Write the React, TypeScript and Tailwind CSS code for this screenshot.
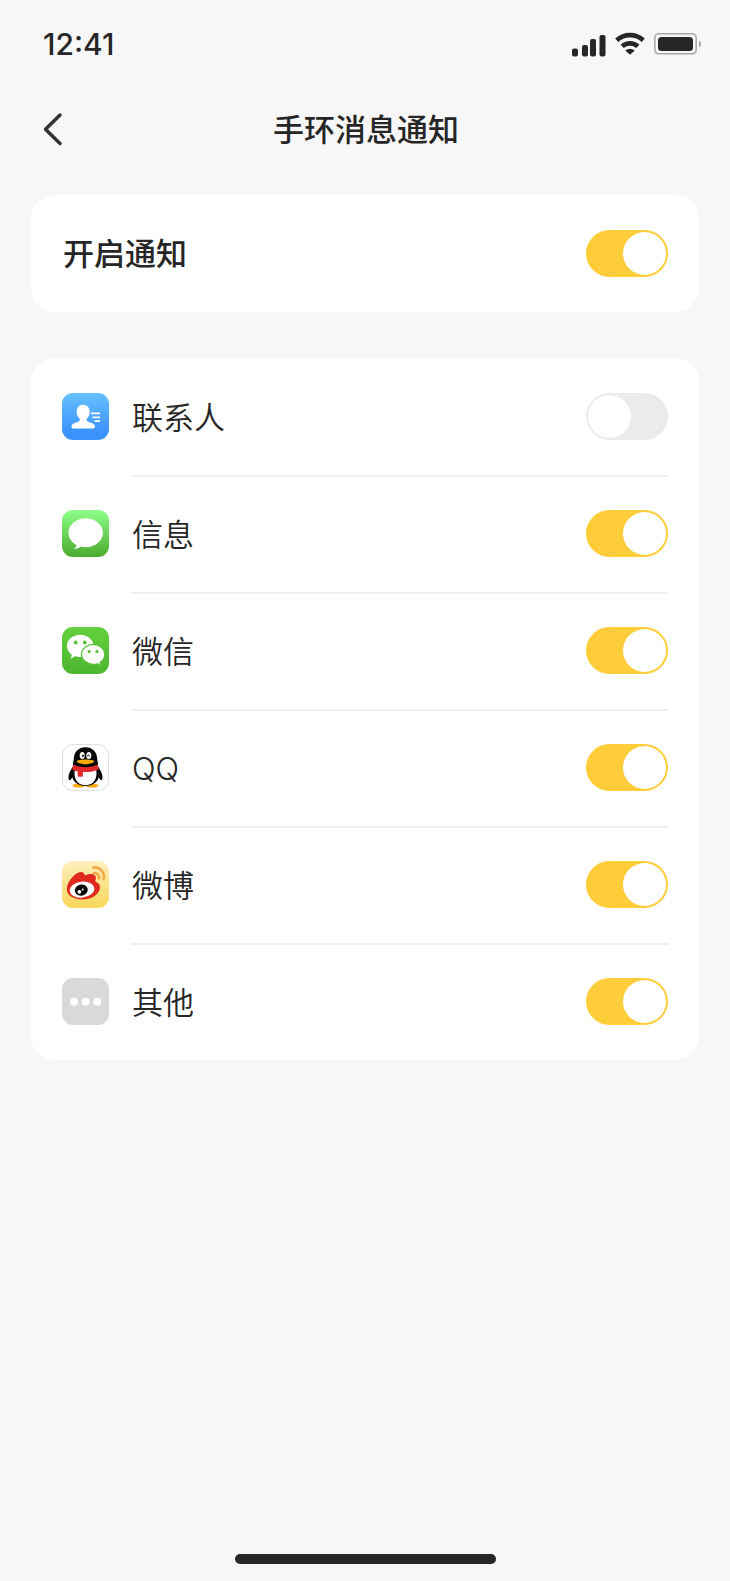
import { useState } from 'react';
import type { ReactNode } from 'react';

interface AppItem {
    id: string;
    name: string;
    icon: ReactNode;
    enabled: boolean;
}

const ICON_CLASS = 'block w-[47px] h-[47px] shrink-0';

function ContactsIcon() {
    return (
        <svg viewBox="0 0 47 47" className={ICON_CLASS} aria-hidden="true">
            <defs>
                <linearGradient id="contactsBg" x1="0" y1="0" x2="0" y2="1">
                    <stop offset="0" stopColor="#66c0ff" />
                    <stop offset="0.85" stopColor="#3a93ff" />
                    <stop offset="1" stopColor="#3a93ff" />
                </linearGradient>
            </defs>
            <rect width="47" height="47" rx="11" fill="url(#contactsBg)" />
            <path
                d="M21 11.800c-3.800 0-6.400 2.900-6.400 6.900 0 3 1.300 5.500 3.100 6.900.3 2.200-.5 3-2.300 3.600l-2.800.9c-2 .7-3.100 2-3.100 3.600 0 1.200.6 1.800 1.800 1.800h19.800c1.200 0 1.800-.6 1.800-1.800 0-1.600-1.100-2.900-3.100-3.600l-2.800-.9c-1.800-.6-2.600-1.400-2.300-3.600 1.800-1.400 3.100-3.900 3.100-6.900 0-4-2.800-6.900-6.800-6.900z"
                fill="#fff"
            />
            <path d="M29 20.300h9M30.500 24.300H38M32.500 28.200H38" stroke="#fff" strokeWidth="1.800" fill="none" />
        </svg>
    );
}

function MessagesIcon() {
    return (
        <svg viewBox="0 0 47 47" className={ICON_CLASS} aria-hidden="true">
            <defs>
                <linearGradient id="messagesBg" x1="0" y1="0" x2="0" y2="1">
                    <stop offset="0" stopColor="#8dff88" />
                    <stop offset="1" stopColor="#4bab2d" />
                </linearGradient>
            </defs>
            <rect width="47" height="47" rx="11" fill="url(#messagesBg)" />
            <path
                d="M23.700 8.200c-9.500 0-17.200 6.500-17.200 14.500 0 5.200 3.200 9.700 8 12.300-.3 1.500-1 2.700-2.200 3.900 2.500.1 4.700-.9 6.500-2.300 1.600.4 3.200.6 4.900.6 9.500 0 17.200-6.500 17.200-14.500S33.200 8.200 23.700 8.200z"
                fill="#fff"
            />
        </svg>
    );
}

function WechatIcon() {
    return (
        <svg viewBox="0 0 47 47" className={ICON_CLASS} aria-hidden="true">
            <defs>
                <linearGradient id="wechatBg" x1="0" y1="0" x2="0" y2="1">
                    <stop offset="0" stopColor="#62d13d" />
                    <stop offset="1" stopColor="#4eb52f" />
                </linearGradient>
            </defs>
            <rect width="47" height="47" rx="11" fill="url(#wechatBg)" />
            <path
                d="M18.200 7.800C10.800 7.800 4.900 12.800 4.900 19c0 3.500 1.900 6.600 5 8.700l-1.200 4 4.600-2.500c1.600.5 3.200.8 4.900.8 7.400 0 13.300-5 13.300-11.100S25.600 7.800 18.200 7.800z"
                fill="#fff"
            />
            <path
                d="M31.300 17.300c-6.300 0-11.800 4.400-11.800 9.900S25 37.300 31.300 37.300c1.400 0 2.800-.2 4-.6l3.600 2-.9-3.300c2.800-1.800 4.700-4.700 4.700-8 0-5.500-5.100-10.100-11.400-10.100z"
                fill="#fff"
                stroke="#58c237"
                strokeWidth="1.200"
            />
            <g fill="#55bf35">
                <circle cx="13.700" cy="15.500" r="1.900" />
                <circle cx="22.800" cy="15.500" r="1.900" />
                <circle cx="27.200" cy="24.500" r="1.600" />
                <circle cx="35" cy="24.500" r="1.600" />
            </g>
        </svg>
    );
}

function QQIcon() {
    return (
        <svg viewBox="0 0 47 47" className={ICON_CLASS} aria-hidden="true">
            <rect x="0.500" y="0.500" width="46" height="46" rx="10.500" fill="#fff" stroke="#dedede" />
            <ellipse cx="17" cy="41.600" rx="6.500" ry="1.900" fill="#faab07" />
            <ellipse cx="30" cy="41.600" rx="6.500" ry="1.900" fill="#faab07" />
            <path
                d="M23.500 3.300c-7 0-11.700 4.800-11.700 11.700 0 1.700-.5 2.400-.7 4.200-.2 1.200.2 2.400-.2 3.300C8.600 26 6.500 29.500 6.500 33c0 2.100.5 3.200 1.100 3.200.9 0 2.200-1.800 2.700-3 1.200 5.300 6.500 8.700 13.200 8.700s12-3.400 13.200-8.700c.5 1.200 1.800 3 2.700 3 .6 0 1.100-1.100 1.100-3.200 0-3.500-2.100-7-4.400-10.500-.4-.9 0-2.100-.2-3.300-.2-1.800-.7-2.500-.7-4.200 0-6.900-4.700-11.700-11.700-11.700z"
                fill="#080808"
            />
            <path d="M13 25c-2 9 2 16.200 10.500 16.200S36 34 34 25z" fill="#fff" />
            <path d="M11.300 20.600c7.200 3.500 17.200 3.500 24.400 0l1 4.800c-3.400 1.600-8.700 2.600-15.800 2.600v4.500c-1.600.5-3.600.4-5.200-.1v-4.900c-2-.4-4-1.200-5.500-2.100z" fill="#e3282a" />
            <ellipse cx="20.200" cy="11.500" rx="2.500" ry="3.500" fill="#fff" />
            <ellipse cx="26.800" cy="11.500" rx="2.500" ry="3.500" fill="#fff" />
            <circle cx="21" cy="11.800" r="1.100" fill="#080808" />
            <path d="M25.400 12.400c.3-1.800 1.900-1.800 2.100 0" stroke="#080808" strokeWidth="1" fill="none" />
            <path d="M14.800 17.400c0-1.200 4.600-1.900 8.700-1.900s8.700.7 8.700 1.900-4.700 2.800-8.700 2.800-8.700-1.600-8.700-2.800z" fill="#faab07" />
        </svg>
    );
}

function WeiboIcon() {
    return (
        <svg viewBox="0 0 47 47" className={ICON_CLASS} aria-hidden="true">
            <defs>
                <linearGradient id="weiboBg" x1="0" y1="0" x2="0" y2="1">
                    <stop offset="0" stopColor="#fff0be" />
                    <stop offset="1" stopColor="#f8d659" />
                </linearGradient>
            </defs>
            <rect width="47" height="47" rx="11" fill="url(#weiboBg)" />
            <path
                d="M15.500 12c3.600-1.700 6.700-1.300 6.900 1.600 0 .7.400.9 1.100.6 4.200-1.700 8.600-1.500 9.900.9.700 1.300.5 2.900 0 4.300-.2.800 0 1.200.7 1.500 2.600 1.100 4.100 3 3.900 5.900-.4 6.400-8.200 11.700-17.200 11.700S4.800 34.500 4.800 28.300c0-3.400 1.400-6.900 4-10.300 2-2.600 4.300-4.800 6.700-6z"
                fill="#e0291f"
            />
            <ellipse cx="20" cy="28.600" rx="12.300" ry="8" transform="rotate(-6 20 28.600)" fill="#fff" />
            <ellipse cx="19.300" cy="29.100" rx="6.500" ry="5.600" transform="rotate(-15 19.300 29.100)" fill="#0a0a0a" />
            <circle cx="17.400" cy="30.800" r="1.900" fill="#fff" />
            <circle cx="20.700" cy="28.500" r="0.900" fill="#fff" />
            <path
                d="M32 12.200c3.300-.3 5.600 2.100 4.900 5.300M31.300 6.500c7-.8 12 5 10.300 11.700"
                fill="none"
                stroke="#f3a747"
                strokeWidth="2.700"
                strokeLinecap="round"
            />
        </svg>
    );
}

function OtherIcon() {
    return (
        <svg viewBox="0 0 47 47" className={ICON_CLASS} aria-hidden="true">
            <rect width="47" height="47" rx="11" fill="#d9d9d9" />
            <g fill="#fff">
                <circle cx="12" cy="23.800" r="4" />
                <circle cx="23.600" cy="23.800" r="4" />
                <circle cx="35.200" cy="23.800" r="4" />
            </g>
        </svg>
    );
}

const initialItems: AppItem[] = [
    { id: 'contacts', name: '联系人', icon: <ContactsIcon />, enabled: false },
    { id: 'messages', name: '信息', icon: <MessagesIcon />, enabled: true },
    { id: 'wechat', name: '微信', icon: <WechatIcon />, enabled: true },
    { id: 'qq', name: 'QQ', icon: <QQIcon />, enabled: true },
    { id: 'weibo', name: '微博', icon: <WeiboIcon />, enabled: true },
    { id: 'other', name: '其他', icon: <OtherIcon />, enabled: true },
];

interface SwitchProps {
    id: string;
    checked: boolean;
    onChange: (checked: boolean) => void;
}

function Switch({ id, checked, onChange }: SwitchProps) {
    return (
        <input
            id={id}
            type="checkbox"
            role="switch"
            checked={checked}
            onChange={(e) => onChange(e.target.checked)}
            className="appearance-none shrink-0 cursor-pointer w-[82px] h-[47px] p-0.5 rounded-full bg-[#ebebeb] checked:bg-[#ffcc3a] before:block before:w-[43px] before:h-[43px] before:rounded-full before:bg-white checked:before:ml-auto"
        />
    );
}

function StatusBar() {
    return (
        <div className="flex items-center justify-between h-[88px] pl-[43px] pr-7">
            <span className="font-['Inter','Liberation_Sans',sans-serif] text-[30px] leading-10 font-medium">12:41</span>
            <div className="flex items-center gap-[9px]">
                <svg width="34" height="26" viewBox="0 0 34 26" fill="#262626" aria-hidden="true">
                    <rect x="0" y="17.500" width="6" height="8" rx="2" />
                    <rect x="10" y="14" width="6" height="11.500" rx="2" />
                    <rect x="18" y="8" width="6" height="17.500" rx="2" />
                    <rect x="27.500" y="4" width="6" height="21.500" rx="2" />
                </svg>
                <svg width="30" height="24" viewBox="0 0 30 24" fill="none" stroke="#262626" strokeWidth="4.600" aria-hidden="true">
                    <path d="M1.700 8.200a20 20 0 0 1 26.600 0" />
                    <path d="M7.200 14.400a11.500 11.500 0 0 1 15.600 0" />
                    <path d="M10.300 18.600a7.500 7.500 0 0 1 9.400 0L15 22.800z" fill="#262626" stroke="none" />
                </svg>
                <svg width="48" height="24" viewBox="0 0 48 24" aria-hidden="true">
                    <rect x="0.800" y="1.800" width="41.400" height="20" rx="4" fill="none" stroke="#a8a8a8" strokeWidth="1.600" />
                    <rect x="4" y="5" width="35" height="14" rx="3.500" fill="#262626" />
                    <path d="M45 8.500c2.700 1.500 2.700 5.500 0 7z" fill="#a8a8a8" />
                </svg>
            </div>
        </div>
    );
}

export default function App() {
    const [allEnabled, setAllEnabled] = useState(true);
    const [items, setItems] = useState(initialItems);

    const toggleItem = (id: string, enabled: boolean) => {
        setItems(items.map((item) => (item.id === id ? { ...item, enabled } : item)));
    };

    return (
        <div className="min-h-screen flex flex-col bg-[#f7f7f7] text-[#262626] font-['Inter','Noto_Sans_CJK_SC',sans-serif]">
            <StatusBar />

            <header className="grid grid-cols-[1fr_auto_1fr] items-center h-[82px] px-10">
                <button type="button" aria-label="返回" className="cursor-pointer justify-self-start">
                    <svg width="24" height="34" viewBox="0 0 24 34" fill="none" stroke="#333" strokeWidth="3.500" strokeLinecap="round" strokeLinejoin="round" aria-hidden="true">
                        <path d="M20 3 5.500 17.300 20 31.500" />
                    </svg>
                </button>
                <h1 className="pl-0.5 pt-0.5 text-[31px] leading-10 font-medium">手环消息通知</h1>
            </header>

            <main className="flex flex-col gap-[46px] px-[31px] pt-[25px]">
                <section className="flex items-center justify-between h-[117px] px-[31px] bg-white rounded-3xl">
                    <label htmlFor="switch-all" className="pl-px text-[31px] leading-10 font-medium">开启通知</label>
                    <Switch id="switch-all" checked={allEnabled} onChange={setAllEnabled} />
                </section>

                <ul className="px-[31px] bg-white rounded-3xl">
                    {items.map((item, index) => (
                        <li key={item.id} className="flex items-center gap-[22px] h-[117px]">
                            {item.icon}
                            <div
                                className={`flex flex-1 items-center justify-between self-stretch border-y-2 border-b-transparent ${index === 0 ? 'border-t-transparent' : 'border-t-[#efefef]'}`}
                            >
                                <label htmlFor={`switch-${item.id}`} className="pl-px pt-0.5 text-[31px] leading-10 font-[350]">
                                    {item.name}
                                </label>
                                <Switch
                                    id={`switch-${item.id}`}
                                    checked={item.enabled}
                                    onChange={(enabled) => toggleItem(item.id, enabled)}
                                />
                            </div>
                        </li>
                    ))}
                </ul>
            </main>

            <div className="mt-auto flex justify-center pt-10 pb-[17px]">
                <div className="w-[261px] h-2.5 rounded-full bg-[#262626]" />
            </div>
        </div>
    );
}
